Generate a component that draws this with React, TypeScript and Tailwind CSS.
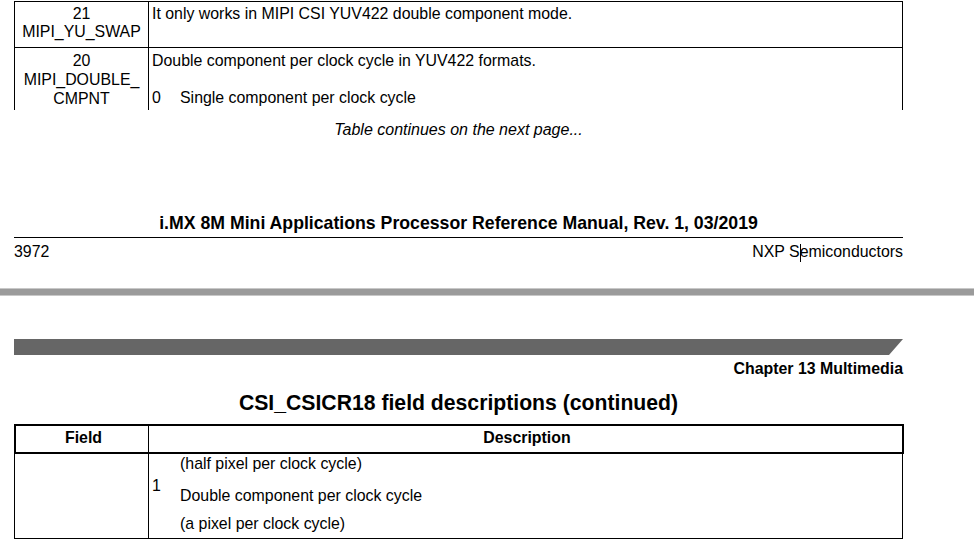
import React from 'react';

const Caret: React.FC = () => (
  <span className="relative">
    <span className="absolute left-0 top-[1px] h-[18px] w-px bg-black" />
  </span>
);

const App: React.FC = () => {
  return (
    <div className="w-[974px] h-[539px] overflow-hidden bg-white text-black font-['Liberation_Sans',Arial,sans-serif] text-[15.9px] leading-[18px]">
      {/* end of previous page */}
      <div className="ml-[14px] w-[889px] pt-px">
        <div className="flex h-[46px] border-t border-x border-black">
          <div className="w-[134px] shrink-0 border-r border-black pt-[3px] text-center">
            21
            <br />
            MIPI_YU_SWAP
          </div>
          <div className="pl-[3px] pt-[3px]">It only works in MIPI CSI YUV422 double component mode.</div>
        </div>
        <div className="flex h-[63px] border-t border-x border-black">
          <div className="w-[134px] shrink-0 border-r border-black pt-[3px] text-center leading-[19px]">
            20
            <br />
            MIPI_DOUBLE_
            <br />
            CMPNT
          </div>
          <div className="pl-[3px] pt-[4px]">
            <div>Double component per clock cycle in YUV422 formats.</div>
            <div className="mt-[19px] flex">
              <span className="w-[28px] shrink-0">0</span>
              <span>Single component per clock cycle</span>
            </div>
          </div>
        </div>
      </div>

      <div className="mt-[11px] w-[917px] text-center italic text-[16px]">Table continues on the next page...</div>

      <div className="ml-[14px] w-[889px]">
        <div className="mt-[74px] text-center font-bold text-[17.7px] leading-[20px]">
          i.MX 8M Mini Applications Processor Reference Manual, Rev. 1, 03/2019
        </div>
        <div className="mt-[4px] h-px bg-black" />
        <div className="mt-[5px] flex justify-between">
          <span>3972</span>
          <span>
            NXP S<Caret />emiconductors
          </span>
        </div>
      </div>

      {/* page gap */}
      <div className="mt-[27px] h-[8px] border-y border-[#c8c8c8] bg-[#9b9b9b]" />

      {/* next page */}
      <div className="ml-[14px] w-[889px]">
        <div className="mt-[43px] h-[16px] bg-[#666666] [clip-path:polygon(0_0,100%_0,calc(100%-14px)_100%,0_100%)]" />
        <div className="mt-[5px] text-right font-bold">Chapter 13 Multimedia</div>
        <div className="mt-[13px] text-center font-bold text-[21.2px] leading-[24px]">
          CSI_CSICR18 field descriptions (continued)
        </div>
        <div className="mt-[9px] flex h-[30px] w-[890px] border-2 border-black font-bold">
          <div className="w-[133px] shrink-0 border-r border-black pl-[3px] pt-[3px] text-center">Field</div>
          <div className="grow pl-[3px] pt-[3px] text-center">Description</div>
        </div>
        <div className="flex h-[85px] border-x border-b border-black">
          <div className="w-[134px] shrink-0 border-r border-black" />
          <div className="flex pl-[3px] pt-px">
            <div className="w-[28px] shrink-0 pt-[22px]">1</div>
            <div>
              <div>(half pixel per clock cycle)</div>
              <div className="mt-[14px]">Double component per clock cycle</div>
              <div className="mt-[10px]">(a pixel per clock cycle)</div>
            </div>
          </div>
        </div>
      </div>
    </div>
  );
};

export default App;
